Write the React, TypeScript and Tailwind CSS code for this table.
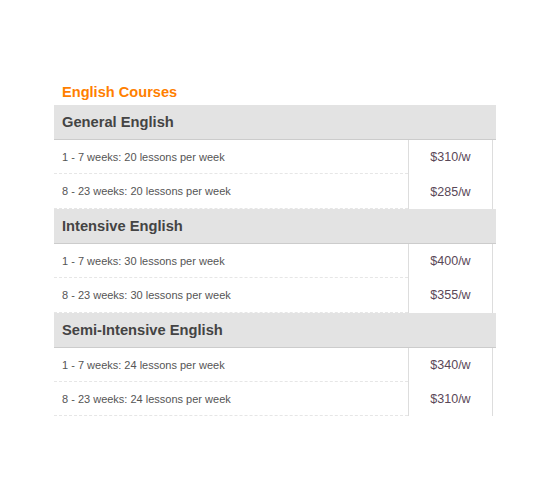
const sections = [
  {
    name: 'General English',
    rows: [
      ['1 - 7 weeks: 20 lessons per week', '$310/w'],
      ['8 - 23 weeks: 20 lessons per week', '$285/w'],
    ],
  },
  {
    name: 'Intensive English',
    rows: [
      ['1 - 7 weeks: 30 lessons per week', '$400/w'],
      ['8 - 23 weeks: 30 lessons per week', '$355/w'],
    ],
  },
  {
    name: 'Semi-Intensive English',
    rows: [
      ['1 - 7 weeks: 24 lessons per week', '$340/w'],
      ['8 - 23 weeks: 24 lessons per week', '$310/w'],
    ],
  },
];

export default function App() {
  return (
    <div className="min-h-[500px] w-[550px] bg-white pt-[84px] pl-[54px] font-['Liberation_Sans',Arial,sans-serif]">
      <div className="mb-[5px] pl-2 text-[14.6px] font-bold leading-[16px] text-[#ff7f00]">English Courses</div>
      {sections.map((s) => (
        <div key={s.name}>
          <div className="box-border flex h-[35px] w-[442px] items-center border-b border-[#cccccc] bg-[#e3e3e3] pt-px pl-2 text-[14.7px] font-bold text-[#444444]">
            {s.name}
          </div>
          {s.rows.map(([label, price]) => (
            <div key={label} className="flex h-[34.4px] w-[439px]">
              <div className="box-border flex flex-1 items-center border-b border-dashed border-[#e6e6e6] pt-px pl-2 text-[11px] text-[#555555]">
                {label}
              </div>
              <div className="box-border flex w-[85px] items-center justify-center border-x border-[#dddddd] pt-px text-[12.5px] text-[#5a4858]">
                {price}
              </div>
            </div>
          ))}
        </div>
      ))}
    </div>
  );
}
